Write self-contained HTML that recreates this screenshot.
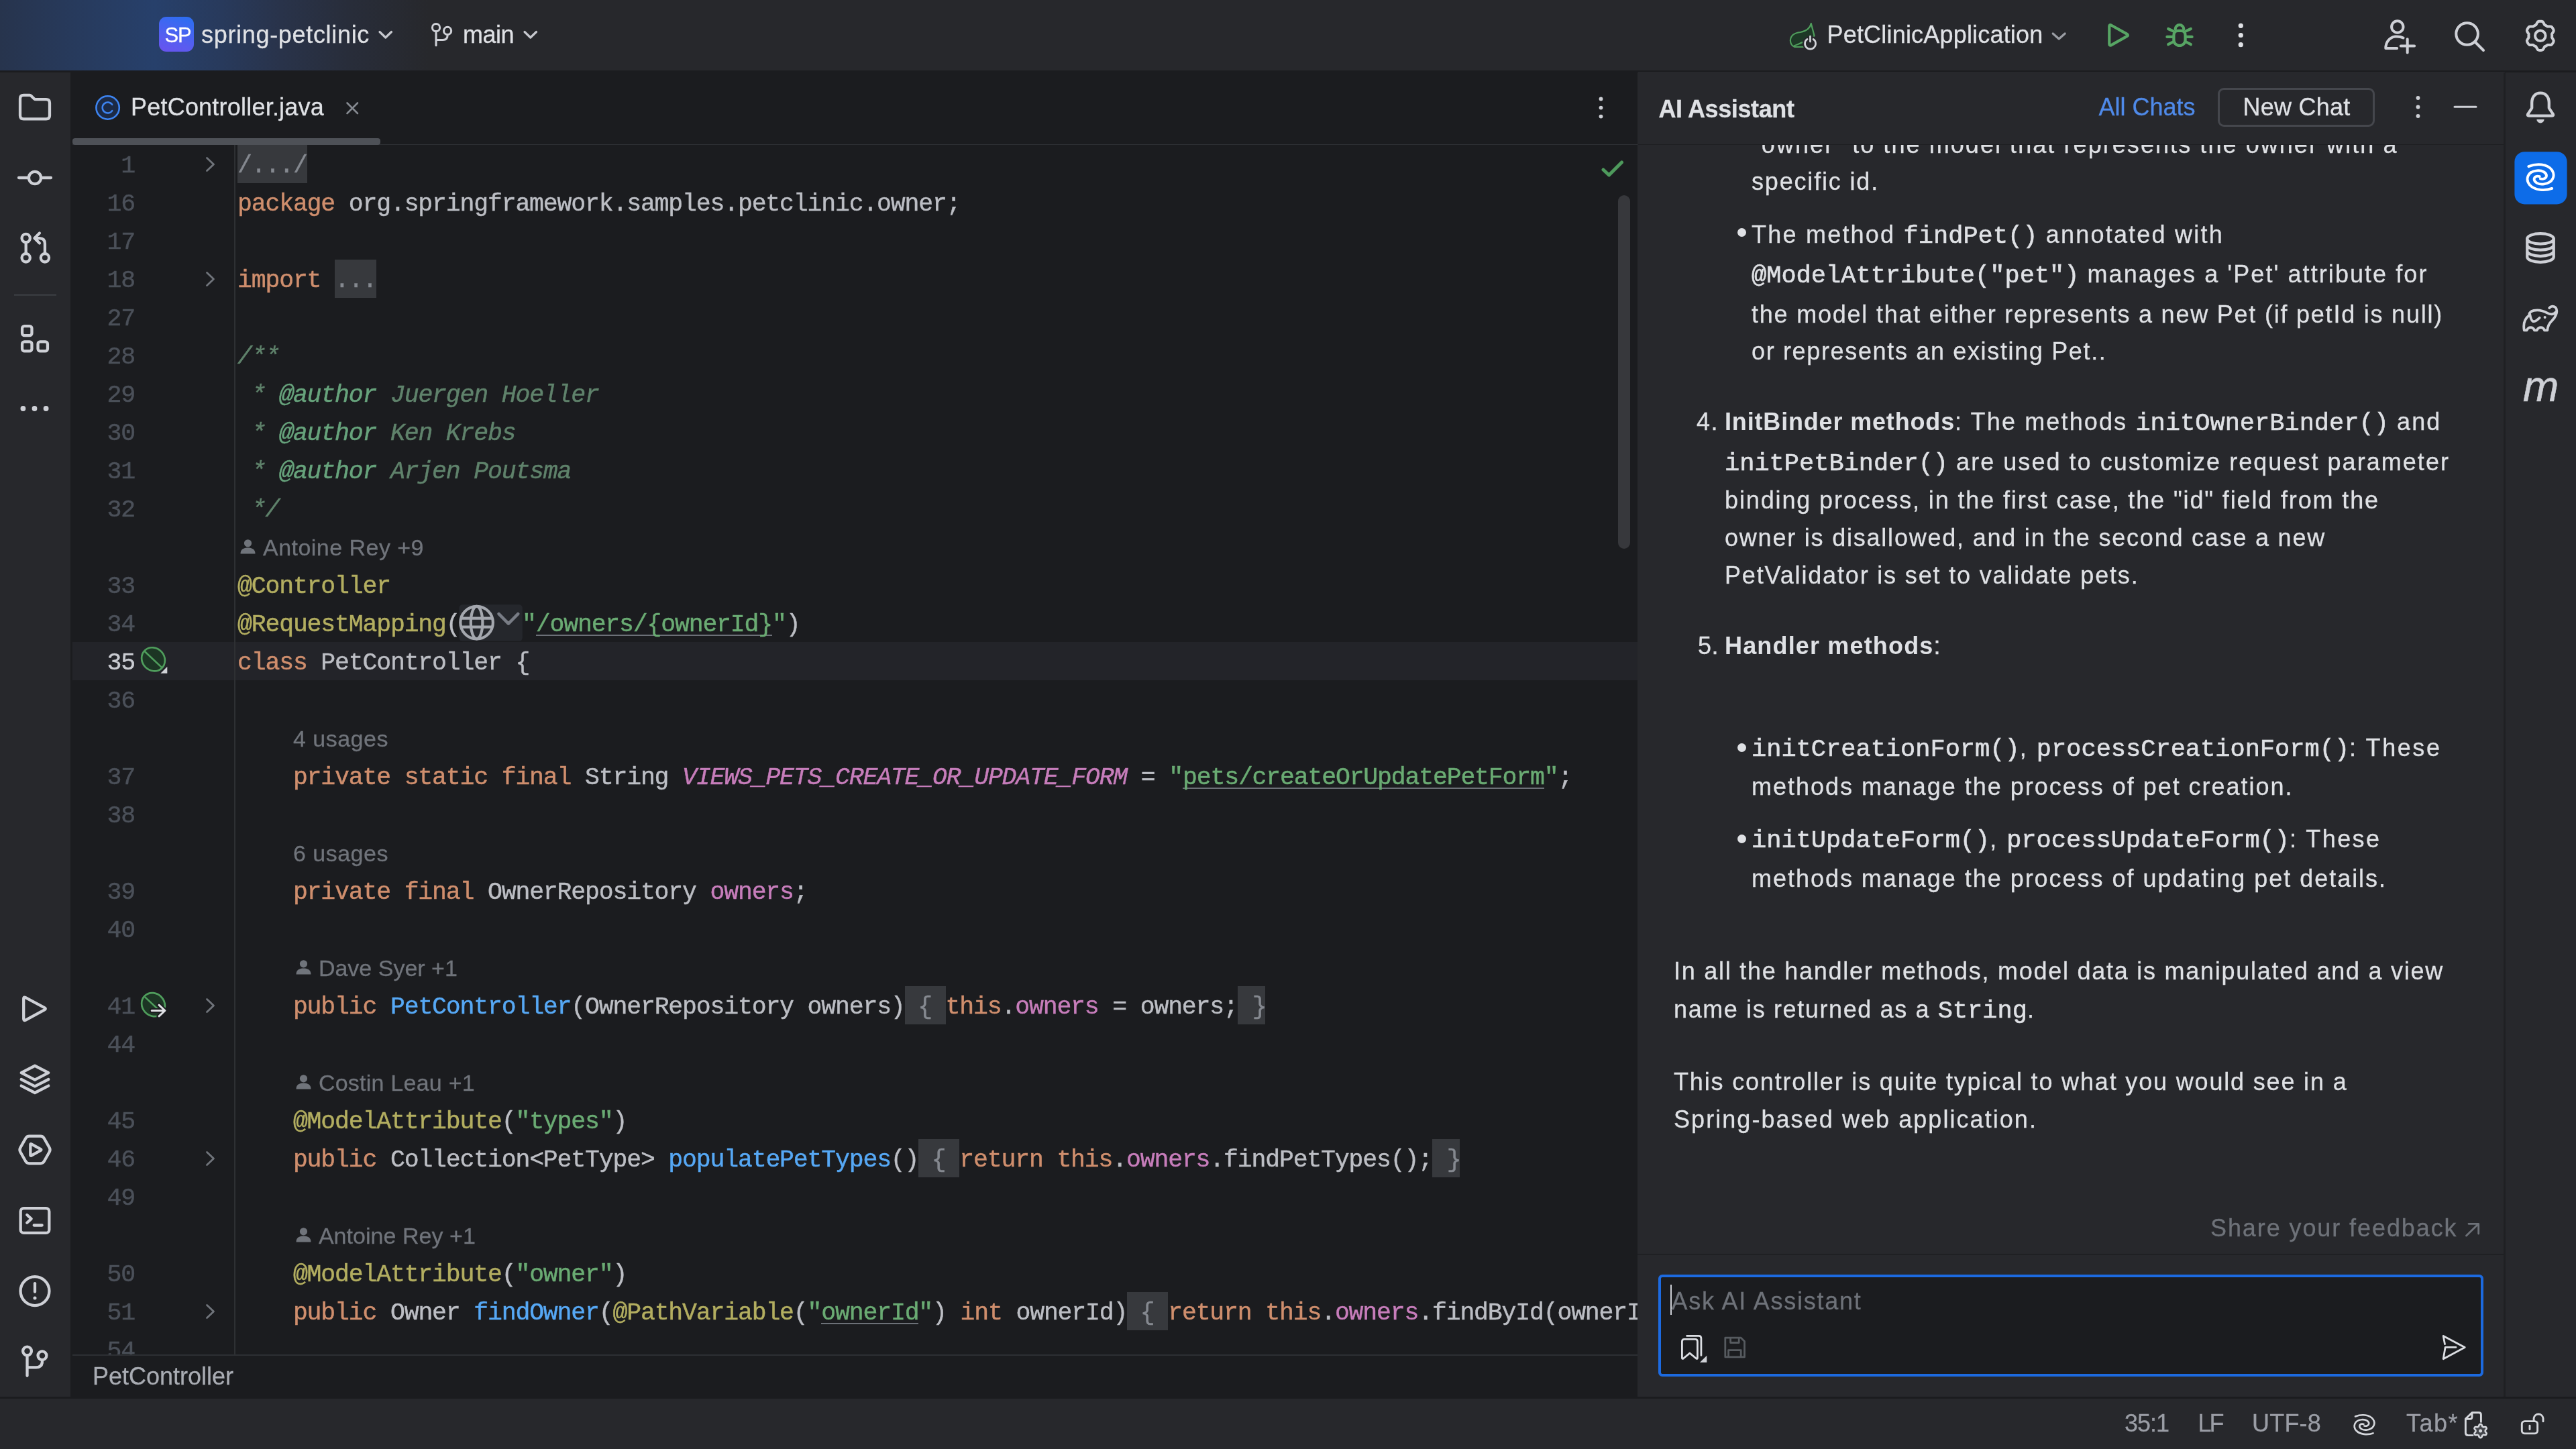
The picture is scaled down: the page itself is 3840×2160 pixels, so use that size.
<!DOCTYPE html>
<html><head><meta charset="utf-8"><title>PetController.java</title>
<style>

html,body{margin:0;padding:0}
body{width:3840px;height:2160px;overflow:hidden;background:#27282c;position:relative;font-family:'Liberation Sans', sans-serif;font-kerning:normal}
#root{position:absolute;left:0;top:0;width:3840px;height:2160px;will-change:transform}
.t{position:absolute;white-space:pre;-webkit-text-stroke:0.28px}
.b{position:absolute;}
svg{position:absolute;overflow:visible}
.mono{font-family:'Liberation Mono', monospace;}
/* code */
#code{position:absolute;left:108px;top:216px;width:2333px;height:1803px;overflow:hidden;background:#1b1c1f}
.row{position:absolute;left:246px;height:57px;white-space:pre;font:400 36.5px/63.6px 'Liberation Mono', monospace;letter-spacing:-1.184px;color:#bcbec4;-webkit-text-stroke:0.45px;}
.row span{display:inline-block;height:57px;vertical-align:top}
.ln{position:absolute;left:0;width:93px;text-align:right;height:57px;font:400 36.5px/63.6px 'Liberation Mono', monospace;letter-spacing:-1.184px;color:#4b5059;-webkit-text-stroke:0.45px}
.k{color:#cf8e6d} .s{color:#6aab73} .a{color:#b3ae60} .m{color:#56a8f5} .f{color:#c77dbb}
.cf{color:#c77dbb;font-style:italic} .dc{color:#5f826b;font-style:italic} .dt{color:#67a37c;font-style:italic}
.su{color:#6aab73;background:linear-gradient(#6c7077,#6c7077) 0 45.6px/100% 2px no-repeat}
.fo{background:#37393d;color:#858990;text-align:center}
.inl{position:absolute;height:57px;white-space:pre;color:#70747b}
.am{font:400 37px/1 "Liberation Mono",monospace;letter-spacing:0;-webkit-text-stroke:0.6px}
b{-webkit-text-stroke:0}

</style></head><body>
<div id="root">
<div class="b" style="left:0;top:0;width:3840px;height:105px;background:linear-gradient(90deg,#27344d 0px,#273a5c 110px,#27406b 230px,#283a5c 330px,#29334a 420px,#282d3a 520px,#27282c 640px)"></div>
<div class="b" style="left:0;top:105px;width:3840px;height:3px;background:#1b1c1f"></div>
<div class="b" style="left:0;top:108px;width:105px;height:1974px;background:#27282c"></div>
<div class="b" style="left:105px;top:108px;width:3px;height:1974px;background:#1b1c1f"></div>
<div class="b" style="left:108px;top:108px;width:2333px;height:1974px;background:#1b1c1f"></div>
<div class="b" style="left:108px;top:214.5px;width:2333px;height:1.6px;background:#2e3034"></div>
<div class="b" style="left:108px;top:206px;width:459px;height:10px;background:#4e5157;border-radius:4px"></div>
<div class="b" style="left:108px;top:2019px;width:2333px;height:2px;background:#2d2f33"></div>
<div class="b" style="left:2442px;top:106.5px;width:1292px;height:1975.5px;background:#27282c"></div>
<div class="b" style="left:2442px;top:214.5px;width:1291px;height:1.8px;background:#1e1f22"></div>
<div class="b" style="left:2441px;top:1869px;width:1293px;height:2px;background:#1f2023"></div>
<div class="b" style="left:3732px;top:108px;width:3px;height:1974px;background:#1f2023"></div>
<div class="b" style="left:0;top:2082px;width:3840px;height:3px;background:#1b1c1f"></div>
<div class="b" style="left:237px;top:25px;width:52px;height:52px;border-radius:11px;background:linear-gradient(200deg,#2f6df2 10%,#5a5cf0 70%,#6a52ee 100%)"></div>
<div class="t " style="left: 245.5px; top: 32.7px; font: 400 31px / 40px &quot;Liberation Sans&quot;, sans-serif; color: rgb(255, 255, 255); letter-spacing: -1.18px;">SP</div>
<div class="t " style="left: 300px; top: 27.5px; font: 400 36px / 47px &quot;Liberation Sans&quot;, sans-serif; color: rgb(223, 225, 229); letter-spacing: 0.681px;">spring-petclinic</div>
<div class="t " style="left: 690px; top: 27.5px; font: 400 36px / 47px &quot;Liberation Sans&quot;, sans-serif; color: rgb(223, 225, 229); letter-spacing: -0.508px;">main</div>
<div class="t " style="left: 2723.5px; top: 28px; font: 400 36px / 47px &quot;Liberation Sans&quot;, sans-serif; color: rgb(223, 225, 229); letter-spacing: 0.191px;">PetClinicApplication</div>
<div class="t " style="left: 195px; top: 136px; font: 400 36px / 47px &quot;Liberation Sans&quot;, sans-serif; color: rgb(223, 225, 229); letter-spacing: 0.214px;">PetController.java</div>
<div class="t " style="left: 138px; top: 2027.5px; font: 400 36px / 47px &quot;Liberation Sans&quot;, sans-serif; color: rgb(169, 172, 179); letter-spacing: -0.007px;">PetController</div>
<div class="t " style="left: 3167px; top: 2098.3px; font: 400 36px / 47px &quot;Liberation Sans&quot;, sans-serif; color: rgb(154, 157, 165); letter-spacing: -1.02px;">35:1</div>
<div class="t " style="left: 3276.5px; top: 2098.3px; font: 400 36px / 47px &quot;Liberation Sans&quot;, sans-serif; color: rgb(154, 157, 165); letter-spacing: -3.008px;">LF</div>
<div class="t " style="left: 3357px; top: 2098.3px; font: 400 36px / 47px &quot;Liberation Sans&quot;, sans-serif; color: rgb(154, 157, 165); letter-spacing: 0.2px;">UTF-8</div>
<div class="t " style="left: 3587px; top: 2098.3px; font: 400 36px / 47px &quot;Liberation Sans&quot;, sans-serif; color: rgb(154, 157, 165); letter-spacing: 1.484px;">Tab*</div>
<div id="code"><div class="b" style="left:0;top:741px;width:2333px;height:57px;background:#232429"></div>
<div class="b" style="left:241px;top:0;width:2px;height:1803px;background:#2e3033"></div>
<div class="ln" style="top:0px;color:#4b5059">1</div>
<div class="row" style="top:0px"><span class="fo">/.../</span></div>
<svg style="left:199px;top:17.5px" width="14" height="22" viewBox="0 0 14 22"><path d="M1.5 1.5 L11.5 11 L1.5 20.5" fill="none" stroke="#70747b" stroke-width="2.8" stroke-linecap="round" stroke-linejoin="round"></path></svg>
<div class="ln" style="top:57px;color:#4b5059">16</div>
<div class="row" style="top:57px"><span class="k">package</span> org.springframework.samples.petclinic.owner;</div>
<div class="ln" style="top:114px;color:#4b5059">17</div>
<div class="ln" style="top:171px;color:#4b5059">18</div>
<div class="row" style="top:171px"><span class="k">import</span> <span class="fo">...</span></div>
<svg style="left:199px;top:188.5px" width="14" height="22" viewBox="0 0 14 22"><path d="M1.5 1.5 L11.5 11 L1.5 20.5" fill="none" stroke="#70747b" stroke-width="2.8" stroke-linecap="round" stroke-linejoin="round"></path></svg>
<div class="ln" style="top:228px;color:#4b5059">27</div>
<div class="ln" style="top:285px;color:#4b5059">28</div>
<div class="row" style="top:285px"><span class="dc">/**</span></div>
<div class="ln" style="top:342px;color:#4b5059">29</div>
<div class="row" style="top:342px"><span class="dc"> * </span><span class="dt">@author</span><span class="dc"> Juergen Hoeller</span></div>
<div class="ln" style="top:399px;color:#4b5059">30</div>
<div class="row" style="top:399px"><span class="dc"> * </span><span class="dt">@author</span><span class="dc"> Ken Krebs</span></div>
<div class="ln" style="top:456px;color:#4b5059">31</div>
<div class="row" style="top:456px"><span class="dc"> * </span><span class="dt">@author</span><span class="dc"> Arjen Poutsma</span></div>
<div class="ln" style="top:513px;color:#4b5059">32</div>
<div class="row" style="top:513px"><span class="dc"> */</span></div>
<svg style="left:250.0px;top:587.5px" width="23" height="22" viewBox="0 0 23 22"><circle cx="11.5" cy="5.8" r="5.6" fill="#70747b"></circle><path d="M0.5 21.5 C0.5 15 5 12.5 11.5 12.5 S22.5 15 22.5 21.5 Z" fill="#70747b"></path></svg>
<div class="inl t" style="left: 284px; top: 570px; font: 400 34px / 60px &quot;Liberation Sans&quot;, sans-serif; letter-spacing: 0.469px;">Antoine Rey +9</div>
<div class="ln" style="top:627px;color:#4b5059">33</div>
<div class="row" style="top:627px"><span class="a">@Controller</span></div>
<div class="ln" style="top:684px;color:#4b5059">34</div>
<div class="row" style="top:684px"><span class="a">@RequestMapping</span>(<span style="width:92.5px" id="globe"></span><span class="s">"</span><span class="su">/owners/{ownerId}</span><span class="s">"</span>)</div>
<div class="ln" style="top:741px;color:#c9cbd1">35</div>
<div class="row" style="top:741px"><span class="k">class</span> PetController {</div>
<div class="ln" style="top:798px;color:#4b5059">36</div>
<div class="inl t" style="left: 328.9px; top: 855px; font: 400 34px / 60px &quot;Liberation Sans&quot;, sans-serif; letter-spacing: 0.5px;">4 usages</div>
<div class="ln" style="top:912px;color:#4b5059">37</div>
<div class="row" style="top:912px">    <span class="k">private static final</span> String <span class="cf">VIEWS_PETS_CREATE_OR_UPDATE_FORM</span> = <span class="s">"</span><span class="su">pets/createOrUpdatePetForm</span><span class="s">"</span>;</div>
<div class="ln" style="top:969px;color:#4b5059">38</div>
<div class="inl t" style="left: 328.9px; top: 1026px; font: 400 34px / 60px &quot;Liberation Sans&quot;, sans-serif; letter-spacing: 0.5px;">6 usages</div>
<div class="ln" style="top:1083px;color:#4b5059">39</div>
<div class="row" style="top:1083px">    <span class="k">private final</span> OwnerRepository <span class="f">owners</span>;</div>
<div class="ln" style="top:1140px;color:#4b5059">40</div>
<svg style="left:332.9px;top:1214.5px" width="23" height="22" viewBox="0 0 23 22"><circle cx="11.5" cy="5.8" r="5.6" fill="#70747b"></circle><path d="M0.5 21.5 C0.5 15 5 12.5 11.5 12.5 S22.5 15 22.5 21.5 Z" fill="#70747b"></path></svg>
<div class="inl t" style="left: 366.9px; top: 1197px; font: 400 34px / 60px &quot;Liberation Sans&quot;, sans-serif; letter-spacing: 0.004px;">Dave Syer +1</div>
<div class="ln" style="top:1254px;color:#4b5059">41</div>
<div class="row" style="top:1254px">    <span class="k">public</span> <span class="m">PetController</span>(OwnerRepository owners)<span class="fo" style="width:61px;letter-spacing:0">{</span><span class="k">this</span>.<span class="f">owners</span> = owners;<span class="fo" style="width:41.4px;letter-spacing:0"> }</span></div>
<svg style="left:199px;top:1271.5px" width="14" height="22" viewBox="0 0 14 22"><path d="M1.5 1.5 L11.5 11 L1.5 20.5" fill="none" stroke="#70747b" stroke-width="2.8" stroke-linecap="round" stroke-linejoin="round"></path></svg>
<div class="ln" style="top:1311px;color:#4b5059">44</div>
<svg style="left:332.9px;top:1385.5px" width="23" height="22" viewBox="0 0 23 22"><circle cx="11.5" cy="5.8" r="5.6" fill="#70747b"></circle><path d="M0.5 21.5 C0.5 15 5 12.5 11.5 12.5 S22.5 15 22.5 21.5 Z" fill="#70747b"></path></svg>
<div class="inl t" style="left: 366.9px; top: 1368px; font: 400 34px / 60px &quot;Liberation Sans&quot;, sans-serif; letter-spacing: 0.238px;">Costin Leau +1</div>
<div class="ln" style="top:1425px;color:#4b5059">45</div>
<div class="row" style="top:1425px">    <span class="a">@ModelAttribute</span>(<span class="s">"types"</span>)</div>
<div class="ln" style="top:1482px;color:#4b5059">46</div>
<div class="row" style="top:1482px">    <span class="k">public</span> Collection&lt;PetType&gt; <span class="m">populatePetTypes</span>()<span class="fo" style="width:61px;letter-spacing:0">{</span><span class="k">return</span> <span class="k">this</span>.<span class="f">owners</span>.findPetTypes();<span class="fo" style="width:41.4px;letter-spacing:0"> }</span></div>
<svg style="left:199px;top:1499.5px" width="14" height="22" viewBox="0 0 14 22"><path d="M1.5 1.5 L11.5 11 L1.5 20.5" fill="none" stroke="#70747b" stroke-width="2.8" stroke-linecap="round" stroke-linejoin="round"></path></svg>
<div class="ln" style="top:1539px;color:#4b5059">49</div>
<svg style="left:332.9px;top:1613.5px" width="23" height="22" viewBox="0 0 23 22"><circle cx="11.5" cy="5.8" r="5.6" fill="#70747b"></circle><path d="M0.5 21.5 C0.5 15 5 12.5 11.5 12.5 S22.5 15 22.5 21.5 Z" fill="#70747b"></path></svg>
<div class="inl t" style="left: 366.9px; top: 1596px; font: 400 34px / 60px &quot;Liberation Sans&quot;, sans-serif; letter-spacing: 0.04px;">Antoine Rey +1</div>
<div class="ln" style="top:1653px;color:#4b5059">50</div>
<div class="row" style="top:1653px">    <span class="a">@ModelAttribute</span>(<span class="s">"owner"</span>)</div>
<div class="ln" style="top:1710px;color:#4b5059">51</div>
<div class="row" style="top:1710px">    <span class="k">public</span> Owner <span class="m">findOwner</span>(<span class="a">@PathVariable</span>(<span class="s">"</span><span class="su">ownerId</span><span class="s">"</span>) <span class="k">int</span> ownerId)<span class="fo" style="width:61px;letter-spacing:0">{</span><span class="k">return</span> <span class="k">this</span>.<span class="f">owners</span>.findById(ownerId);<span class="fo" style="width:41.4px;letter-spacing:0"> }</span></div>
<svg style="left:199px;top:1727.5px" width="14" height="22" viewBox="0 0 14 22"><path d="M1.5 1.5 L11.5 11 L1.5 20.5" fill="none" stroke="#70747b" stroke-width="2.8" stroke-linecap="round" stroke-linejoin="round"></path></svg>
<div class="ln" style="top:1767px;color:#4b5059">54</div></div>
<div class="b" style="left:2412px;top:291px;width:18px;height:527px;border-radius:9px;background:#37383c"></div>
<svg style="left:2387px;top:239px" width="34" height="26" viewBox="0 0 34 26"><path d="M3 14 L11.5 22 L30.5 3" fill="none" stroke="#4e9a5c" stroke-width="5" stroke-linecap="round" stroke-linejoin="round"></path></svg>
<div class="t " style="left: 2472.5px; top: 139px; font: 700 36px / 47px &quot;Liberation Sans&quot;, sans-serif; color: rgb(223, 225, 229); letter-spacing: -0.393px;">AI Assistant</div>
<div class="t " style="left: 3128.5px; top: 135.5px; font: 400 36px / 47px &quot;Liberation Sans&quot;, sans-serif; color: rgb(79, 138, 233); letter-spacing: -0.007px;">All Chats</div>
<div class="b" style="left:3306px;top:131px;width:228px;height:52px;border:3px solid #45474d;border-radius:9px"></div>
<div class="t " style="left: 3343.5px; top: 135.5px; font: 400 36px / 47px &quot;Liberation Sans&quot;, sans-serif; color: rgb(223, 225, 229); letter-spacing: 0.242px;">New Chat</div>
<div class="b" id="aic" style="left:2441px;top:216px;width:1291px;height:1653px;overflow:hidden"><div class="t" style="left: 170px; top: -24px; font: 400 36px / 48px &quot;Liberation Sans&quot;, sans-serif; color: rgb(223, 225, 229); letter-spacing: 2.066px;">"owner" to the model that represents the owner with a</div>
<div class="t" style="left: 170px; top: 31px; font: 400 36px / 48px &quot;Liberation Sans&quot;, sans-serif; color: rgb(223, 225, 229); letter-spacing: 1.827px;">specific id.</div>
<div class="b" style="left:149px;top:124.0px;width:13px;height:13px;border-radius:50%;background:#dfe1e5"></div>
<div class="t" style="left: 170px; top: 109.5px; font: 400 36px / 48px &quot;Liberation Sans&quot;, sans-serif; color: rgb(223, 225, 229); letter-spacing: 2.225px;">The method <span class="am">findPet()</span> annotated with</div>
<div class="t" style="left: 170px; top: 169px; font: 400 36px / 48px &quot;Liberation Sans&quot;, sans-serif; color: rgb(223, 225, 229); letter-spacing: 2.067px;"><span class="am">@ModelAttribute("pet")</span> manages a 'Pet' attribute for</div>
<div class="t" style="left: 170px; top: 228.5px; font: 400 36px / 48px &quot;Liberation Sans&quot;, sans-serif; color: rgb(223, 225, 229); letter-spacing: 1.779px;">the model that either represents a new Pet (if petId is null)</div>
<div class="t" style="left: 170px; top: 284px; font: 400 36px / 48px &quot;Liberation Sans&quot;, sans-serif; color: rgb(223, 225, 229); letter-spacing: 1.653px;">or represents an existing Pet..</div>
<div class="t" style="left: 88px; top: 388.5px; font: 400 36px / 48px &quot;Liberation Sans&quot;, sans-serif; color: rgb(223, 225, 229); letter-spacing: 1.484px;">4.</div>
<div class="t" style="left: 130px; top: 388.5px; font: 400 36px / 48px &quot;Liberation Sans&quot;, sans-serif; color: rgb(223, 225, 229); letter-spacing: 2.139px;"><b class="fx" style="letter-spacing: 0.832px;">InitBinder methods</b>: The methods <span class="am">initOwnerBinder()</span> and</div>
<div class="t" style="left: 130px; top: 448.5px; font: 400 36px / 48px &quot;Liberation Sans&quot;, sans-serif; color: rgb(223, 225, 229); letter-spacing: 2.04px;"><span class="am">initPetBinder()</span> are used to customize request parameter</div>
<div class="t" style="left: 130px; top: 506px; font: 400 36px / 48px &quot;Liberation Sans&quot;, sans-serif; color: rgb(223, 225, 229); letter-spacing: 1.864px;">binding process, in the first case, the "id" field from the</div>
<div class="t" style="left: 130px; top: 562px; font: 400 36px / 48px &quot;Liberation Sans&quot;, sans-serif; color: rgb(223, 225, 229); letter-spacing: 1.786px;">owner is disallowed, and in the second case a new</div>
<div class="t" style="left: 130px; top: 618px; font: 400 36px / 48px &quot;Liberation Sans&quot;, sans-serif; color: rgb(223, 225, 229); letter-spacing: 1.834px;">PetValidator is set to validate pets.</div>
<div class="t" style="left: 90px; top: 722.5px; font: 400 36px / 48px &quot;Liberation Sans&quot;, sans-serif; color: rgb(223, 225, 229); letter-spacing: 0.484px;">5.</div>
<div class="t" style="left: 130px; top: 722.5px; font: 400 36px / 48px &quot;Liberation Sans&quot;, sans-serif; color: rgb(223, 225, 229); letter-spacing: -0.531px;"><b class="fx" style="letter-spacing: 1.164px;">Handler methods</b>:</div>
<div class="b" style="left:149px;top:891.5px;width:13px;height:13px;border-radius:50%;background:#dfe1e5"></div>
<div class="t" style="left: 170px; top: 874.5px; font: 400 36px / 48px &quot;Liberation Sans&quot;, sans-serif; color: rgb(223, 225, 229); letter-spacing: 2.568px;"><span class="am">initCreationForm()</span>, <span class="am">processCreationForm()</span>: These</div>
<div class="t" style="left: 170px; top: 932.5px; font: 400 36px / 48px &quot;Liberation Sans&quot;, sans-serif; color: rgb(223, 225, 229); letter-spacing: 1.978px;">methods manage the process of pet creation.</div>
<div class="b" style="left:149px;top:1027.5px;width:13px;height:13px;border-radius:50%;background:#dfe1e5"></div>
<div class="t" style="left: 170px; top: 1011px; font: 400 36px / 48px &quot;Liberation Sans&quot;, sans-serif; color: rgb(223, 225, 229); letter-spacing: 2.436px;"><span class="am">initUpdateForm()</span>, <span class="am">processUpdateForm()</span>: These</div>
<div class="t" style="left: 170px; top: 1069.5px; font: 400 36px / 48px &quot;Liberation Sans&quot;, sans-serif; color: rgb(223, 225, 229); letter-spacing: 1.97px;">methods manage the process of updating pet details.</div>
<div class="t" style="left: 54px; top: 1207.5px; font: 400 36px / 48px &quot;Liberation Sans&quot;, sans-serif; color: rgb(223, 225, 229); letter-spacing: 1.74px;">In all the handler methods, model data is manipulated and a view</div>
<div class="t" style="left: 54px; top: 1264.5px; font: 400 36px / 48px &quot;Liberation Sans&quot;, sans-serif; color: rgb(223, 225, 229); letter-spacing: 1.611px;">name is returned as a <span class="am">String</span>.</div>
<div class="t" style="left: 54px; top: 1372.5px; font: 400 36px / 48px &quot;Liberation Sans&quot;, sans-serif; color: rgb(223, 225, 229); letter-spacing: 1.831px;">This controller is quite typical to what you would see in a</div>
<div class="t" style="left: 54px; top: 1428.5px; font: 400 36px / 48px &quot;Liberation Sans&quot;, sans-serif; color: rgb(223, 225, 229); letter-spacing: 2.058px;">Spring-based web application.</div>
<div class="t" style="left: 854px; top: 1591px; font: 400 36px / 48px &quot;Liberation Sans&quot;, sans-serif; color: rgb(110, 114, 121); letter-spacing: 1.91px;">Share your feedback</div></div>
<div class="b" style="left:2472px;top:1900px;width:1222px;height:143.5px;border:4px solid #1c6ae0;border-radius:6px;background:#1b1c1f"></div>
<div class="b" style="left:2489.5px;top:1915px;width:2.5px;height:45px;background:#ced0d6"></div>
<div class="t " style="left: 2491.5px; top: 1915.5px; font: 400 36px / 47px &quot;Liberation Sans&quot;, sans-serif; color: rgb(110, 114, 121); letter-spacing: 1.742px;">Ask AI Assistant</div>
<div class="t" style="left:3761px;top:541px;font:italic 400 64px/70px 'Liberation Sans', sans-serif;color:#ced0d6;-webkit-text-stroke:0.6px">m</div>
<svg width="3840" height="2160" style="left:0;top:0" viewBox="0 0 3840 2160"><g transform="translate(25.33 133.03) scale(2.6667)" fill="none" stroke="#ced0d6" stroke-width="1.6" stroke-linecap="round" stroke-linejoin="round"><path d="M1.75 5.3 Q1.75 3.35 3.7 3.35 H7.1 Q7.6 3.35 7.95 3.7 L9.6 5.35 Q9.95 5.7 10.45 5.7 H16.3 Q18.25 5.7 18.25 7.65 V14.7 Q18.25 16.65 16.3 16.65 H3.7 Q1.75 16.65 1.75 14.7 Z"></path></g>
<g transform="translate(25.33 238.33) scale(2.6667)" fill="none" stroke="#ced0d6" stroke-width="1.6" stroke-linecap="round" stroke-linejoin="round"><circle cx="10" cy="10" r="3.4"></circle><path d="M1 10H6.4M13.6 10H19"></path></g>
<g transform="translate(25.33 343.03) scale(2.6667)" fill="none" stroke="#ced0d6" stroke-width="1.6" stroke-linecap="round" stroke-linejoin="round"><circle cx="5" cy="4.5" r="2.3"></circle><circle cx="5" cy="15.5" r="2.3"></circle><circle cx="15.6" cy="15.5" r="2.3"></circle><path d="M5 6.9V13.1M15.6 13.1V7.6Q15.6 4.5 12.5 4.5H10M12.6 1.7L9.8 4.5L12.6 7.3"></path></g>
<rect x="21" y="438.3" width="63" height="2.6" fill="#393b40"></rect>
<g transform="translate(25.33 478.33) scale(2.6667)" fill="none" stroke="#ced0d6" stroke-width="1.6" stroke-linecap="round" stroke-linejoin="round"><rect x="2.9" y="2.9" width="5.4" height="5.3" rx="1.3"></rect><rect x="2.9" y="11.6" width="5.4" height="5.3" rx="1.3"></rect><rect x="11.7" y="11.6" width="5.4" height="5.3" rx="1.3"></rect></g>
<circle cx="34.4" cy="609" r="3.9" fill="#ced0d6"></circle>
<circle cx="51.5" cy="609" r="3.9" fill="#ced0d6"></circle>
<circle cx="68.6" cy="609" r="3.9" fill="#ced0d6"></circle>
<g transform="translate(25.33 1477.13) scale(2.6667)" fill="none" stroke="#ced0d6" stroke-width="1.6" stroke-linecap="round" stroke-linejoin="round"><path d="M3.70 4.40 Q3.70 3.10 4.84 3.72 L15.36 9.38 Q16.50 10.00 15.36 10.62 L4.84 16.28 Q3.70 16.90 3.70 15.60 Z"></path></g>
<g transform="translate(25.33 1582.33) scale(2.6667)" fill="none" stroke="#ced0d6" stroke-width="1.6" stroke-linecap="round" stroke-linejoin="round"><path d="M10 2.4L17.6 6.3L10 10.2L2.4 6.3Z M2.4 10L10 13.9L17.6 10 M2.4 13.6L10 17.5L17.6 13.6"></path></g>
<g transform="translate(25.33 1687.33) scale(2.6667)" fill="none" stroke="#ced0d6" stroke-width="1.6" stroke-linecap="round" stroke-linejoin="round"><path d="M1.89 11.22 Q1.20 10.00 1.89 8.78 L4.81 3.62 Q5.50 2.40 6.90 2.40 L13.10 2.40 Q14.50 2.40 15.19 3.62 L18.11 8.78 Q18.80 10.00 18.11 11.22 L15.19 16.38 Q14.50 17.60 13.10 17.60 L6.90 17.60 Q5.50 17.60 4.81 16.38 Z"></path><path d="M7.50 7.10 Q7.50 6.50 8.02 6.79 L13.28 9.71 Q13.80 10.00 13.28 10.29 L8.02 13.21 Q7.50 13.50 7.50 12.90 Z"></path></g>
<g transform="translate(25.33 1791.83) scale(2.6667)" fill="none" stroke="#ced0d6" stroke-width="1.6" stroke-linecap="round" stroke-linejoin="round"><rect x="2" y="3.5" width="16" height="13.8" rx="1.8"></rect><path d="M5.6 7.2L8 9.4L5.6 11.6M9.5 13H14"></path></g>
<g transform="translate(25.33 1897.93) scale(2.6667)" fill="none" stroke="#ced0d6" stroke-width="1.6" stroke-linecap="round" stroke-linejoin="round"><circle cx="10" cy="10" r="8.05"></circle><path d="M10 5.7V10.4"></path><circle cx="10" cy="13.9" r="0.95" fill="#ced0d6" stroke="none"></circle></g>
<g transform="translate(25.33 2002.03) scale(2.6667)" fill="none" stroke="#ced0d6" stroke-width="1.6" stroke-linecap="round" stroke-linejoin="round"><circle cx="5.7" cy="4.5" r="2.4"></circle><circle cx="14.1" cy="7" r="2.4"></circle><path d="M5.7 6.9V18.3M14.1 9.4V10.2Q14.1 13.6 10.7 13.6H5.7"></path></g>
<path d="M566.0 47.5L574.75 56.0L583.5 47.5" fill="none" stroke="#c6c8ce" stroke-width="3.2" stroke-linecap="round" stroke-linejoin="round"></path>
<path d="M782.0 47.5L790.75 56.0L799.5 47.5" fill="none" stroke="#c6c8ce" stroke-width="3.2" stroke-linecap="round" stroke-linejoin="round"></path>
<path d="M3060.2 50.0L3069.2 58.0L3078.2 50.0" fill="none" stroke="#9a9da4" stroke-width="3.2" stroke-linecap="round" stroke-linejoin="round"></path>
<g transform="translate(636.7 30.2) scale(2.6667)" fill="none" stroke="#ced0d6" stroke-width="1.15" stroke-linecap="round" stroke-linejoin="round"><circle cx="5" cy="4.1" r="2.1"></circle><circle cx="11.4" cy="5.9" r="2.1"></circle><path d="M5 6.2V14.1M11.4 8V8.5Q11.4 11 8.9 11H5"></path></g>
<g transform="translate(2650 20) scale(0.04831)"><path d="M1030 310 C1000 450 900 540 700 580 C520 600 400 680 390 830 C390 930 450 1010 520 1035 H790 L1130 690 Z" fill="#1d3826" stroke="#4f9d5c" stroke-width="46" stroke-linejoin="round"></path><path d="M505 1005 C600 960 690 930 760 890" fill="none" stroke="#4f9d5c" stroke-width="44" stroke-linecap="round"></path><circle cx="1005" cy="930" r="238" fill="#27282c"></circle><path d="M912 795 A166 166 0 1 0 1098 795" fill="none" stroke="#d3d5da" stroke-width="56" stroke-linecap="round"></path><path d="M1003 705 V870" fill="none" stroke="#d3d5da" stroke-width="56" stroke-linecap="round"></path></g>
<path d="M3144.30 39.60 Q3144.30 36.00 3147.44 37.76 L3170.46 50.64 Q3173.60 52.40 3170.46 54.17 L3147.44 67.13 Q3144.30 68.90 3144.30 65.30 Z" fill="none" stroke="#57a564" stroke-width="4.2" stroke-linecap="round" stroke-linejoin="round"></path>
<path d="M3240.4 53 Q3240.4 45.8 3246.5 45.8 H3251.5 Q3257.6 45.8 3257.6 53 V59.4 A8.6 8.6 0 0 1 3240.4 59.4 Z" fill="none" stroke="#57a564" stroke-width="4.2" stroke-linecap="round" stroke-linejoin="round"></path>
<path d="M3242.7 43.5 A6.3 6.3 0 0 1 3255.3 43.5" fill="none" stroke="#57a564" stroke-width="4.2" stroke-linecap="round" stroke-linejoin="round"></path>
<path d="M3239 46.2L3232.2 43 M3238.5 54.9H3230.4 M3239.2 62.5L3232.2 66.2 M3259 46.2L3265.8 43 M3259.5 54.9H3267.6 M3258.8 62.5L3265.8 66.2" fill="none" stroke="#57a564" stroke-width="4.2" stroke-linecap="round" stroke-linejoin="round"></path>
<circle cx="3340.3" cy="38.3" r="3.6" fill="#dfe1e5"></circle>
<circle cx="3340.3" cy="52.5" r="3.6" fill="#dfe1e5"></circle>
<circle cx="3340.3" cy="66.7" r="3.6" fill="#dfe1e5"></circle>
<circle cx="3573.8" cy="40" r="8.7" fill="none" stroke="#ced0d6" stroke-width="4"></circle>
<path d="M3582.5 56.5 C3578.5 54.3 3574 54.2 3570.4 54.5 C3561.4 55.6 3556.3 63.5 3556.3 71.9 H3573.2" fill="none" stroke="#ced0d6" stroke-width="4" stroke-linecap="round" stroke-linejoin="round"></path>
<path d="M3578.8 68.5H3599.1M3588.7 58.3V78.6" fill="none" stroke="#ced0d6" stroke-width="4" stroke-linecap="round" stroke-linejoin="round"></path>
<circle cx="3677.6" cy="50.5" r="16.3" fill="none" stroke="#ced0d6" stroke-width="4"></circle>
<path d="M3690 63L3702 75" fill="none" stroke="#ced0d6" stroke-width="4" stroke-linecap="round" stroke-linejoin="round"></path>
<path d="M3804.20 53.30L3804.16 52.09L3804.03 50.88L3804.86 49.46L3805.88 47.83L3806.70 46.06L3806.53 44.51L3805.87 43.16L3805.12 41.85L3804.27 40.60L3803.02 39.69L3801.08 39.51L3799.15 39.58L3797.51 39.59L3796.53 38.87L3795.50 38.23L3794.43 37.66L3793.32 37.17L3792.50 35.74L3791.60 34.04L3790.48 32.44L3789.06 31.82L3787.55 31.71L3786.05 31.71L3784.54 31.82L3783.12 32.44L3782.00 34.04L3781.10 35.74L3780.28 37.17L3779.17 37.66L3778.10 38.23L3777.07 38.87L3776.09 39.59L3774.45 39.58L3772.52 39.51L3770.58 39.69L3769.33 40.60L3768.48 41.85L3767.73 43.16L3767.07 44.51L3766.90 46.06L3767.72 47.83L3768.74 49.46L3769.57 50.88L3769.44 52.09L3769.40 53.30L3769.44 54.51L3769.57 55.72L3768.74 57.14L3767.72 58.77L3766.90 60.54L3767.07 62.09L3767.73 63.44L3768.48 64.75L3769.33 66.00L3770.58 66.91L3772.52 67.09L3774.45 67.02L3776.09 67.01L3777.07 67.73L3778.10 68.37L3779.17 68.94L3780.28 69.43L3781.10 70.86L3782.00 72.56L3783.12 74.16L3784.54 74.78L3786.05 74.89L3787.55 74.89L3789.06 74.78L3790.48 74.16L3791.60 72.56L3792.50 70.86L3793.32 69.43L3794.43 68.94L3795.50 68.37L3796.53 67.73L3797.51 67.01L3799.15 67.02L3801.08 67.09L3803.02 66.91L3804.27 66.00L3805.12 64.75L3805.87 63.44L3806.53 62.09L3806.70 60.54L3805.88 58.77L3804.86 57.14L3804.03 55.72L3804.16 54.51Z" fill="none" stroke="#ced0d6" stroke-width="4" stroke-linecap="round" stroke-linejoin="round"></path>
<circle cx="3786.8" cy="53.3" r="7.8" fill="none" stroke="#ced0d6" stroke-width="4"></circle>
<circle cx="160.6" cy="160.5" r="17.2" fill="#1c2a45" stroke="#3d84f1" stroke-width="2.6"></circle>
<path d="M167.2 155.9 A8 8 0 1 0 167.2 165.1" fill="none" stroke="#3d84f1" stroke-width="2.5" stroke-linecap="round" stroke-linejoin="round"></path>
<path d="M517.5 153.5L533 169M533 153.5L517.5 169" fill="none" stroke="#868a91" stroke-width="2.6" stroke-linecap="round" stroke-linejoin="round"></path>
<circle cx="2386.5" cy="147.5" r="2.9" fill="#ced0d6"></circle>
<circle cx="2386.5" cy="160.6" r="2.9" fill="#ced0d6"></circle>
<circle cx="2386.5" cy="173.6" r="2.9" fill="#ced0d6"></circle>
<circle cx="3604.5" cy="146" r="2.9" fill="#ced0d6"></circle>
<circle cx="3604.5" cy="159.5" r="2.9" fill="#ced0d6"></circle>
<circle cx="3604.5" cy="173" r="2.9" fill="#ced0d6"></circle>
<path d="M3659 159.3H3691" fill="none" stroke="#ced0d6" stroke-width="3" stroke-linecap="round" stroke-linejoin="round"></path>
<g transform="translate(3760.33 132.83) scale(2.6667)" fill="none" stroke="#ced0d6" stroke-width="1.6" stroke-linecap="round" stroke-linejoin="round"><path d="M10 2.2C6.9 2.2 5.2 4.6 5.2 7.6V10.6L2.9 14.1Q2.6 14.9 3.5 14.9H16.5Q17.4 14.9 17.1 14.1L14.8 10.6V7.6C14.8 4.6 13.1 2.2 10 2.2Z"></path><path d="M7.9 16.9H12.1A2.1 2.1 0 0 1 7.9 16.9Z" fill="#ced0d6" stroke="none"></path></g>
<rect x="3748.4" y="226.2" width="78.2" height="78.2" rx="15" fill="#0d6ce8"></rect>
<g transform="translate(3740 215) scale(0.06901311249137336)" fill="none" stroke="#ffffff" stroke-width="56" stroke-linecap="round"><path d="M425 480 C600 410 830 420 930 560 C1010 680 950 830 760 860 C640 880 540 820 545 750 C550 700 600 680 662 697"></path><path d="M930 955 C780 1010 560 1000 450 880 C350 760 400 590 600 570 C720 555 820 620 810 690 C800 740 740 762 680 746"></path></g>
<g transform="translate(3760.33 342.83) scale(2.6667)" fill="none" stroke="#ced0d6" stroke-width="1.6" stroke-linecap="round" stroke-linejoin="round"><ellipse cx="10" cy="4.9" rx="7.4" ry="2.9"></ellipse><path d="M2.6 4.9V15.1C2.6 16.7 5.9 18 10 18S17.4 16.7 17.4 15.1V4.9M2.6 8.3C2.6 9.9 5.9 11.2 10 11.2S17.4 9.9 17.4 8.3M2.6 11.7C2.6 13.3 5.9 14.6 10 14.6S17.4 13.3 17.4 11.7"></path></g>
<g transform="translate(3750 440) scale(0.04831)" fill="none" stroke="#ced0d6" stroke-width="78" stroke-linecap="round" stroke-linejoin="round"><path d="M1040 395 C1080 340 1180 320 1240 390 C1300 470 1270 640 1120 790 C1020 880 990 950 980 1085 H890 C870 1020 820 995 775 995 C720 995 680 1030 655 1085 H580 C560 1020 510 995 460 995 C405 995 365 1030 345 1085 H265 C230 900 280 720 430 610"></path><path d="M430 610 C400 560 460 500 560 475 C700 440 850 480 980 550 C1080 600 1180 600 1240 520"></path><path d="M440 590 C460 700 480 790 540 810 C610 830 690 740 740 697"></path><circle cx="903" cy="683" r="42" fill="#ced0d6" stroke="none"></circle></g>
<ellipse cx="228.5" cy="982.8" rx="18.3" ry="16.6" transform="rotate(48 228.5 982.8)" fill="#1c3524" stroke="#4f9d5c" stroke-width="2.7"></ellipse>
<path d="M215.9 971.3L240.8 994.5999999999999" fill="none" stroke="#4f9d5c" stroke-width="2.6" stroke-linecap="round" stroke-linejoin="round"></path>
<path d="M249.3 993.7V1003.7H239.3Z" fill="#d0d2d6"></path>
<ellipse cx="228.5" cy="1497.6" rx="18.3" ry="16.6" transform="rotate(48 228.5 1497.6)" fill="#1c3524" stroke="#4f9d5c" stroke-width="2.7"></ellipse>
<path d="M215.9 1486.1L240.8 1509.3999999999999" fill="none" stroke="#4f9d5c" stroke-width="2.6" stroke-linecap="round" stroke-linejoin="round"></path>
<path d="M226.2 1506.5H245.3M237 1498.2L245.9 1506.5L237 1514.8" fill="none" stroke="#1b1c1f" stroke-width="7" stroke-linecap="round" stroke-linejoin="round"></path>
<path d="M226.2 1506.5H245.3M237 1498.2L245.9 1506.5L237 1514.8" fill="none" stroke="#e0e1e5" stroke-width="3" stroke-linecap="round" stroke-linejoin="round"></path>
<rect x="684.4" y="901.3" width="94.4" height="54.3" rx="5" fill="#25272c"></rect>
<g fill="none" stroke="#a4a7ae" stroke-width="4.2"><circle cx="710.6" cy="928.1" r="24.3"></circle><ellipse cx="710.6" cy="928.1" rx="8.8" ry="24.3"></ellipse><path d="M687.3 921.6H733.9M687.3 934.7H733.9"></path></g>
<path d="M743.6 915.1L757.9 929.6L772.2 915.1" fill="none" stroke="#787c85" stroke-width="4.6" stroke-linecap="round" stroke-linejoin="round"></path>
<path d="M2507.4 2024 V1999.8 Q2507.4 1996.4 2510.8 1996.4 H2527 Q2530.4 1996.4 2530.4 1999.8 V2024 Q2530.4 2026.3 2528.4 2025 L2518.9 2017.2 L2509.4 2025 Q2507.4 2026.3 2507.4 2024 Z" fill="none" stroke="#dcdee3" stroke-width="2.8" stroke-linecap="round" stroke-linejoin="round"></path>
<path d="M2514.6 1991.4 H2532.3 Q2535.9 1991.4 2535.9 1995.2 V2020.4" fill="none" stroke="#dcdee3" stroke-width="2.8" stroke-linecap="round" stroke-linejoin="round"></path>
<path d="M2544.3 2020.7V2031H2533.9Z" fill="#cfd1d6"></path>
<path d="M2571.8 1994.2 H2595.2 L2600.5 1999.5 V2022.9 H2571.8 Z M2579.6 1994.2 V2001.5 H2592.2 V1994.2 M2576.6 2022.9 V2012.6 H2595.2 V2022.9" fill="none" stroke="#565a5f" stroke-width="2.8" stroke-linecap="round" stroke-linejoin="round"></path>
<path d="M3644.5 2003.7 L3642.2 1991.4 L3674.3 2008.4 L3642.2 2025.7 L3645.1 2008.4 H3661" fill="none" stroke="#dcdee3" stroke-width="2.8" stroke-linecap="round" stroke-linejoin="round"></path>
<path d="M3676.5 1842 L3694.5 1824.5 M3680 1824.3 H3694.7 V1839" fill="none" stroke="#6e7279" stroke-width="2.8" stroke-linecap="round" stroke-linejoin="round"></path>
<g transform="translate(3488.7 2086.3) scale(0.0525)" fill="none" stroke="#d5d7dc" stroke-width="50" stroke-linecap="round"><path d="M425 480 C600 410 830 420 930 560 C1010 680 950 830 760 860 C640 880 540 820 545 750 C550 700 600 680 662 697"></path><path d="M930 955 C780 1010 560 1000 450 880 C350 760 400 590 600 570 C720 555 820 620 810 690 C800 740 740 762 680 746"></path></g>
<path d="M3698.4 2119.5 V2109 Q3698.4 2105.8 3695.2 2105.8 H3685 L3675.4 2115.1 V2135.8 Q3675.4 2139.6 3679.2 2139.6 H3686.2 M3685 2106.5 V2112 Q3685 2115.4 3681.6 2115.4 H3676" fill="none" stroke="#d5d7dc" stroke-width="2.9" stroke-linecap="round" stroke-linejoin="round"></path>
<path d="M3704.80 2133.10L3704.78 2132.60L3704.82 2132.09L3705.42 2131.44L3706.06 2130.67L3706.60 2129.82L3706.74 2129.03L3706.43 2128.41L3706.08 2127.80L3705.69 2127.22L3704.94 2126.94L3703.93 2126.98L3702.95 2127.16L3702.09 2127.36L3701.63 2127.13L3701.20 2126.86L3700.76 2126.63L3700.33 2126.34L3700.07 2125.50L3699.73 2124.56L3699.26 2123.67L3698.65 2123.15L3697.95 2123.11L3697.25 2123.11L3696.55 2123.15L3695.94 2123.67L3695.47 2124.56L3695.13 2125.50L3694.87 2126.34L3694.44 2126.63L3694.00 2126.86L3693.57 2127.13L3693.11 2127.36L3692.25 2127.16L3691.27 2126.98L3690.26 2126.94L3689.51 2127.22L3689.12 2127.80L3688.77 2128.41L3688.46 2129.03L3688.60 2129.82L3689.14 2130.67L3689.78 2131.44L3690.38 2132.09L3690.42 2132.60L3690.40 2133.10L3690.42 2133.60L3690.38 2134.11L3689.78 2134.76L3689.14 2135.53L3688.60 2136.38L3688.46 2137.17L3688.77 2137.79L3689.12 2138.40L3689.51 2138.98L3690.26 2139.26L3691.27 2139.22L3692.25 2139.04L3693.11 2138.84L3693.57 2139.07L3694.00 2139.34L3694.44 2139.57L3694.87 2139.86L3695.13 2140.70L3695.47 2141.64L3695.94 2142.53L3696.55 2143.05L3697.25 2143.09L3697.95 2143.09L3698.65 2143.05L3699.26 2142.53L3699.73 2141.64L3700.07 2140.70L3700.33 2139.86L3700.76 2139.57L3701.20 2139.34L3701.63 2139.07L3702.09 2138.84L3702.95 2139.04L3703.93 2139.22L3704.94 2139.26L3705.69 2138.98L3706.08 2138.40L3706.43 2137.79L3706.74 2137.17L3706.60 2136.38L3706.06 2135.53L3705.42 2134.76L3704.82 2134.11L3704.78 2133.60Z" fill="#44464b" stroke="#d5d7dc" stroke-width="2.6" stroke-linecap="round" stroke-linejoin="round"></path>
<circle cx="3697.6" cy="2133.1" r="2.5" fill="#d5d7dc"></circle>
<rect x="3759.3" y="2118.6" width="23.3" height="18.3" rx="4.2" fill="none" stroke="#d5d7dc" stroke-width="2.9"></rect>
<path d="M3777.1 2118.3 V2114.2 A7 7 0 0 1 3791 2114.2 V2118.9 M3771 2125.3V2130.8" fill="none" stroke="#d5d7dc" stroke-width="2.9" stroke-linecap="round" stroke-linejoin="round"></path></svg>
</div>

</body></html>
